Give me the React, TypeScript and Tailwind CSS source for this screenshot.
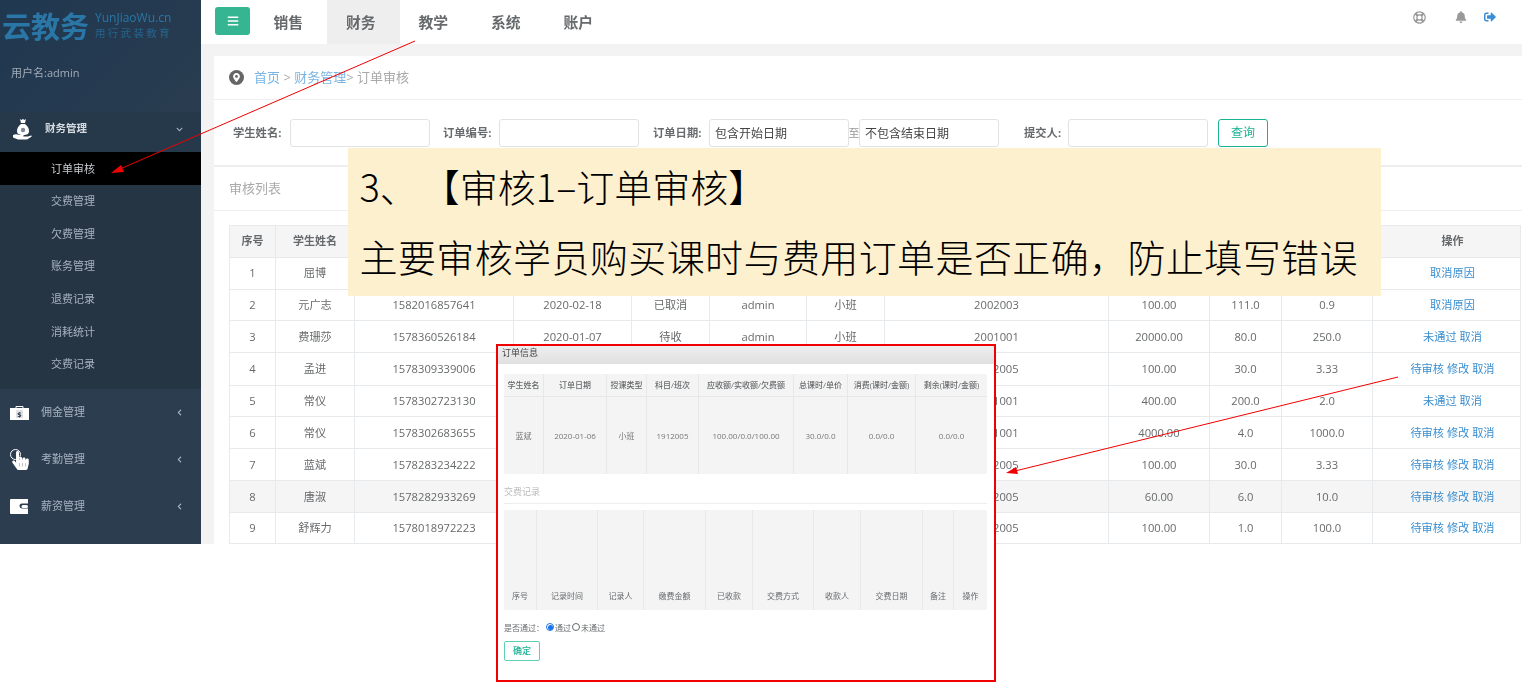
import React from "react";
import { FaBell, FaRegLifeRing, FaSignOutAlt, FaBars, FaChevronDown, FaChevronLeft, FaMapMarkerAlt, FaHandPointer } from "react-icons/fa";

const FONT = "font-['Open_Sans','Noto_Sans_CJK_SC',sans-serif]";

type Row = { h: string; pt: string; bg?: string; c: string[]; ops: string };
/* cells that the callout or the order window cover in the picture are left empty; "2005"-style cells keep the part that shows */
const rows: Row[] = [
  { h: "h-[32px]", pt: "", c: ["1", "屈博", "", "", "", "", "", "", "", "", ""], ops: "取消原因" },
  { h: "h-[31px]", pt: "pt-[1px]", c: ["2", "元广志", "1582016857641", "2020-02-18", "已取消", "admin", "小班", "2002003", "100.00", "111.0", "0.9"], ops: "取消原因" },
  { h: "h-[32px]", pt: "pt-[2px]", c: ["3", "费珊莎", "1578360526184", "2020-01-07", "待收", "admin", "小班", "2001001", "20000.00", "80.0", "250.0"], ops: "未通过 取消" },
  { h: "h-[33px]", pt: "", c: ["4", "孟进", "1578309339006", "", "", "", "", "2005", "100.00", "30.0", "3.33"], ops: "待审核 修改 取消" },
  { h: "h-[31px]", pt: "", c: ["5", "常仪", "1578302723130", "", "", "", "", "1001", "400.00", "200.0", "2.0"], ops: "未通过 取消" },
  { h: "h-[32px]", pt: "pt-[1px]", c: ["6", "常仪", "1578302683655", "", "", "", "", "1001", "4000.00", "4.0", "1000.0"], ops: "待审核 修改 取消" },
  { h: "h-[32px]", pt: "pt-[1px]", c: ["7", "蓝斌", "1578283234222", "", "", "", "", "2005", "100.00", "30.0", "3.33"], ops: "待审核 修改 取消" },
  { h: "h-[32px]", pt: "pt-[1px]", bg: "bg-[#f5f5f5]", c: ["8", "唐淑", "1578282933269", "", "", "", "", "2005", "60.00", "6.0", "10.0"], ops: "待审核 修改 取消" },
  { h: "h-[31px]", pt: "", c: ["9", "舒辉力", "1578018972223", "", "", "", "", "2005", "100.00", "1.0", "100.0"], ops: "待审核 修改 取消" },
];
const colW = ["w-[46px]", "w-[79px]", "w-[159px]", "w-[118px]", "w-[78px]", "w-[97px]", "w-[78px]", "w-[224px]", "w-[101px]", "w-[72px]", "w-[91px]", "w-[148px]"];
const heads = ["序号", "学生姓名", "", "", "", "", "", "", "", "", "", "操作"];

const subs = ["订单审核", "交费管理", "欠费管理", "账务管理", "退费记录", "消耗统计", "交费记录"];

function BagIcon() {
  return (
    <svg viewBox="0 0 20 22" className="w-[20px] h-[22px]" fill="#fff">
      <path d="M7 1l1.500 1L10 1l1.500 1L13 1l-1 4H8z" />
      <path d="M8 6h4c3 2 4 5 4 7 0 3-2 4-6 4s-6-1-6-4c0-2 1-5 4-7z" />
      <path d="M0 17c2-1 4-1 6 0h4c1 0 1 1 0 1.500h5l3-1c1 0 1 1 0 1.500l-4 2.500H5l-5-2z" />
      <circle cx="10" cy="12" r="2.200" fill="#7d8a96" />
    </svg>
  );
}
function CashIcon() {
  return (
    <svg viewBox="0 0 19 14" className="w-[19px] h-[14px]">
      <path d="M6 2V0.500h7V2" stroke="#fff" fill="none" />
      <rect x="0" y="2" width="19" height="12" fill="#fff" />
      <rect x="6" y="4" width="7" height="8" fill="#dfe3e6" />
      <text x="9.500" y="11" fontSize="7.500" fontWeight="700" textAnchor="middle" fill="#2b3d4f">$</text>
    </svg>
  );
}
function WalletIcon() {
  return (
    <svg viewBox="0 0 19 15" className="w-[19px] h-[15px]">
      <path d="M1 0h17v4.500h-6a2.500 2.500 0 000 5h6V15H1a1 1 0 01-1-1V1a1 1 0 011-1z" fill="#fff" />
      <rect x="11.500" y="6" width="6.500" height="3" rx="1.500" fill="#fff" />
    </svg>
  );
}
function TouchIcon() {
  return (
    <div className="relative w-[19px] h-[21px]">
      <div className="absolute left-0 top-0 w-[11px] h-[11px] rounded-full border border-white" />
      <FaHandPointer className="absolute left-[1px] top-[2px] text-white text-[19px]" />
    </div>
  );
}

function Field({ label, labelW, placeholder }: { label: string; labelW: string; placeholder?: string }) {
  return (
    <div className="flex items-center">
      {label ? <span className={`${labelW} text-[11.300px] font-bold text-[#676a6c]`}>{label}</span> : null}
      <div className="w-[139.500px] h-[28px] border border-[#e0e2e3] rounded-[3px] bg-white flex items-center pl-[5px] pt-[2px] text-[12px] text-[#444]">{placeholder}</div>
    </div>
  );
}

export default function App() {
  return (
    <div className={`relative w-[1522px] h-[686px] bg-white overflow-hidden ${FONT}`}>
      <div className="flex h-[544px] blur-[0.3px]">
        {/* sidebar */}
        <aside className="w-[201px] shrink-0 bg-[#2b3d4f] flex flex-col text-[#a7b1c2] text-[11px]">
          <div className="h-[112px] shrink-0 relative bg-[linear-gradient(135deg,#1f3850_0%,#253a50_55%,#2a3d50_100%)]">
            <div className="flex items-start pl-[2px] pt-[8px]">
              <span className="text-[29px] leading-[38px] font-bold text-[#2a76a6]">云教务</span>
              <div className="ml-[6px] pt-[3px] flex flex-col">
                <span className="text-[12px] leading-[14px] text-[#2a76a6]">YunJiaoWu.cn</span>
                <span className="mt-[2px] text-[10.500px] leading-[12px] text-[#26648c] tracking-[2.300px]">用行武装教育</span>
              </div>
            </div>
            <div className="absolute left-[11px] top-[65px] text-[11px] leading-[16px] text-[#a2acb8]">用户名:admin</div>
          </div>
          <div className="h-[40px] shrink-0 bg-[#26394a] flex items-center pl-[13px] pr-[18px] pb-[6px] text-white">
            <BagIcon />
            <span className="ml-[12px] font-bold text-[#d5dae0] text-[10.500px]">财务管理</span>
            <FaChevronDown className="ml-auto text-[7px] text-[#a7b1c2]" />
          </div>
          <div className="h-[237px] shrink-0 bg-[#253543]">
            {subs.map((s, i) => (
              <div key={s} className={`h-[32.600px] flex items-center pl-[51px] pt-[1px] ${i === 0 ? "bg-black text-[#c8ccd0]" : ""}`}>{s}</div>
            ))}
          </div>
          {[
            ["佣金管理", <CashIcon />],
            ["考勤管理", <TouchIcon />],
            ["薪资管理", <WalletIcon />],
          ].map(([t, ic]) => (
            <div key={String(t)} className="h-[47px] shrink-0 flex items-center pl-[10px] pr-[18px]">
              <div className="w-[19px] flex justify-center">{ic}</div>
              <span className="ml-[12px]">{t}</span>
              <FaChevronLeft className="ml-auto text-[7px]" />
            </div>
          ))}
        </aside>

        {/* main */}
        <main className="flex-1 min-w-0 bg-[#f3f3f3] flex flex-col">
          <nav className="h-[44px] shrink-0 bg-white flex items-stretch pl-[14px] pr-[26px]">
            <div className="mt-[7px] w-[35px] h-[28px] rounded-[3px] bg-[#36b592] flex items-center justify-center text-white text-[12px]"><FaBars /></div>
            <div className="ml-[4.500px] flex">
              {["销售", "财务", "教学", "系统", "账户"].map((t, i) => (
                <div key={t} className={`w-[72.500px] flex items-center pl-[19px] text-[14.800px] font-bold text-[#676a6c] ${i === 1 ? "bg-[#eeeeee]" : ""}`}>{t}</div>
              ))}
            </div>
            <div className="ml-auto flex items-start pt-[11px] text-[#999]">
              <FaRegLifeRing className="text-[13px]" />
              <FaBell className="ml-[29px] text-[12px]" />
              <FaSignOutAlt className="ml-[17px] text-[12px] text-[#3a8ed6]" />
            </div>
          </nav>
          <div className="flex-1 min-h-0 pt-[12px] pl-[13px]">
            <section className="h-full bg-white flex flex-col">
              <div className="h-[44px] shrink-0 border-b border-[#eeeeee] flex items-center pl-[15px] text-[13px] text-[#a9a9a9]">
                <span className="w-[15px] h-[15px] rounded-full bg-[#666] flex items-center justify-center text-white text-[9px]"><FaMapMarkerAlt /></span>
                <span className="ml-[10px] text-[#7ab4e2]">首页</span>
                <span>&nbsp;&gt;&nbsp;</span>
                <span className="text-[#7ab4e2]">财务管理</span>
                <span>&gt; 订单审核</span>
              </div>
              <div className="h-[67px] shrink-0 border-b-2 border-[#eeeeee] flex items-center pl-[19px] pt-[1px]">
                <Field label="学生姓名:" labelW="w-[57px]" />
                <div className="ml-[13.500px]"><Field label="订单编号:" labelW="w-[56px]" /></div>
                <div className="ml-[14.500px]"><Field label="订单日期:" labelW="w-[56px]" placeholder="包含开始日期" /></div>
                <span className="w-[10.500px] text-[11px] text-[#999] text-center">至</span>
                <Field label="" labelW="w-0" placeholder="不包含结束日期" />
                <div className="ml-[25.500px]"><Field label="提交人:" labelW="w-[44px]" /></div>
                <button className="ml-[10.500px] w-[50px] h-[28px] rounded-[3px] border border-[#1ab394] text-[#1ab394] text-[12px]">查询</button>
              </div>
              <div className="h-[44px] shrink-0 border-b border-[#eeeeee] flex items-center pl-[15px] text-[13px] text-[#aaaaaa]">审核列表</div>
              <div className="pt-[14px] pl-[15px]">
                <table className="table-fixed border-collapse w-[1291px] text-[11.200px] text-[#676a6c] text-center">
                  <colgroup>
                    {colW.map((w, i) => <col key={i} className={w} />)}
                  </colgroup>
                  <thead>
                    <tr className="h-[32px] bg-[#f5f5f6]">
                      {heads.map((h, i) => <th key={i} className={`border border-[#e7eaec] font-bold text-[11px] ${i === 11 ? "pl-[12px]" : ""}`}>{h}</th>)}
                    </tr>
                  </thead>
                  <tbody>
                    {rows.map((r, ri) => (
                      <tr key={r.c[0]} className={`${r.h} ${r.bg ?? ""}`}>
                        {r.c.map((v, i) => (
                          <td key={i} className={`border border-[#e7eaec] p-0 ${r.pt} ${i === 7 && ri >= 3 ? "text-left pl-[108px]" : ""}`}>{v}</td>
                        ))}
                        <td className={`border border-[#e7eaec] p-0 pl-[12px] text-[#3a8ed0] ${r.pt}`}>{r.ops}</td>
                      </tr>
                    ))}
                  </tbody>
                </table>
              </div>
            </section>
          </div>
        </main>
      </div>

      {/* callout */}
      <div className="absolute left-[348px] top-[148px] w-[1033px] h-[148px] bg-[#fdf0ce] pl-[11.500px] text-black text-[38px] leading-[70px] pt-[3px] font-light font-['Noto_Sans_CJK_SC',sans-serif] [text-spacing-trim:space-all]">
        <div><span className="mr-[4px]">3、</span>【审核1–订单审核】</div>
        <div className="tracking-[0.400px]">主要审核学员购买课时与费用订单是否正确，防止填写错误</div>
      </div>

      {/* modal screenshot */}
      <div className="absolute left-[496px] top-[344px] w-[500px] h-[338px] border-2 border-[#f00000] bg-white flex flex-col text-[#676a6c]">
        <div className="blur-[0.3px] flex flex-col">
          <div className="h-[18px] shrink-0 bg-[linear-gradient(#eeeeee,#e0e0e0)] pl-[4px] text-[9px] leading-[13px] text-[#444]">订单信息</div>
          <div className="px-[6px] pt-[10px] flex flex-col">
            <div className="w-[483px] rounded-[2px] bg-[#f4f4f4] text-[8px] text-center">
              <div className="h-[23px] grid grid-cols-[40px_63px_40px_52px_95px_54px_68px_71px] border-b border-[#e7e7e7] items-stretch font-medium">
                {["学生姓名", "订单日期", "授课类型", "科目/班次", "应收额/实收额/欠费额", "总课时/单价", "消费(课时/金额)", "剩余(课时/金额)"].map((t) => (
                  <div key={t} className="flex items-center justify-center border-r border-[#e7e7e7] last:border-r-0">{t}</div>
                ))}
              </div>
              <div className="h-[77px] grid grid-cols-[40px_63px_40px_52px_95px_54px_68px_71px] items-stretch text-[#777]">
                {["蓝斌", "2020-01-06", "小班", "1912005", "100.00/0.0/100.00", "30.0/0.0", "0.0/0.0", "0.0/0.0"].map((t, i) => (
                  <div key={i} className="flex items-center justify-center border-r border-[#e7e7e7] last:border-r-0">{t}</div>
                ))}
              </div>
            </div>
            <div className="h-[29px] mt-[1px] w-[483px] border-b border-[#eeeeee] flex items-center pt-[6px] text-[9px] text-[#bbbbbb]">交费记录</div>
            <div className="mt-[6px] w-[483px] h-[100px] rounded-[2px] bg-[#f4f4f4] grid grid-cols-[33px_61px_46px_62px_47px_61px_47px_62px_31px_33px] text-[8px] text-center">
              {["序号", "记录时间", "记录人", "缴费金额", "已收款", "交费方式", "收款人", "交费日期", "备注", "操作"].map((t) => (
                <div key={t} className="flex items-end justify-center pb-[8px] border-r border-[#e9e9e9] last:border-r-0">{t}</div>
              ))}
            </div>
            <div className="mt-[10px] h-[16px] flex items-center text-[8px]">
              <span>是否通过：</span>
              <span className="w-[8px] h-[8px] rounded-full border border-[#1a73e8] ml-[2px] mb-[2px] flex items-center justify-center"><span className="w-[5px] h-[5px] rounded-full bg-[#1a73e8]" /></span>
              <span className="ml-[1px]">通过</span>
              <span className="w-[8px] h-[8px] rounded-full border border-[#666] ml-[1px] mb-[2px]" />
              <span className="ml-[1px]">未通过</span>
            </div>
            <button className="mt-[5px] w-[36px] h-[20px] rounded-[2px] border border-[#5ecfb0] text-[#1ab394] text-[9px] font-medium">确定</button>
          </div>
        </div>
      </div>

      {/* arrows */}
      <svg className="absolute left-0 top-0 w-[1522px] h-[686px] pointer-events-none" viewBox="0 0 1522 686" fill="none">
        <line x1="415" y1="41" x2="120" y2="169" stroke="#f00000" strokeWidth="1" />
        <path d="M111 173l10-8 3 7z" fill="#f00000" />
        <line x1="1398" y1="377" x2="1015" y2="471" stroke="#f00000" strokeWidth="1" />
        <path d="M1006 473l10-6 2 7z" fill="#f00000" />
      </svg>
    </div>
  );
}
